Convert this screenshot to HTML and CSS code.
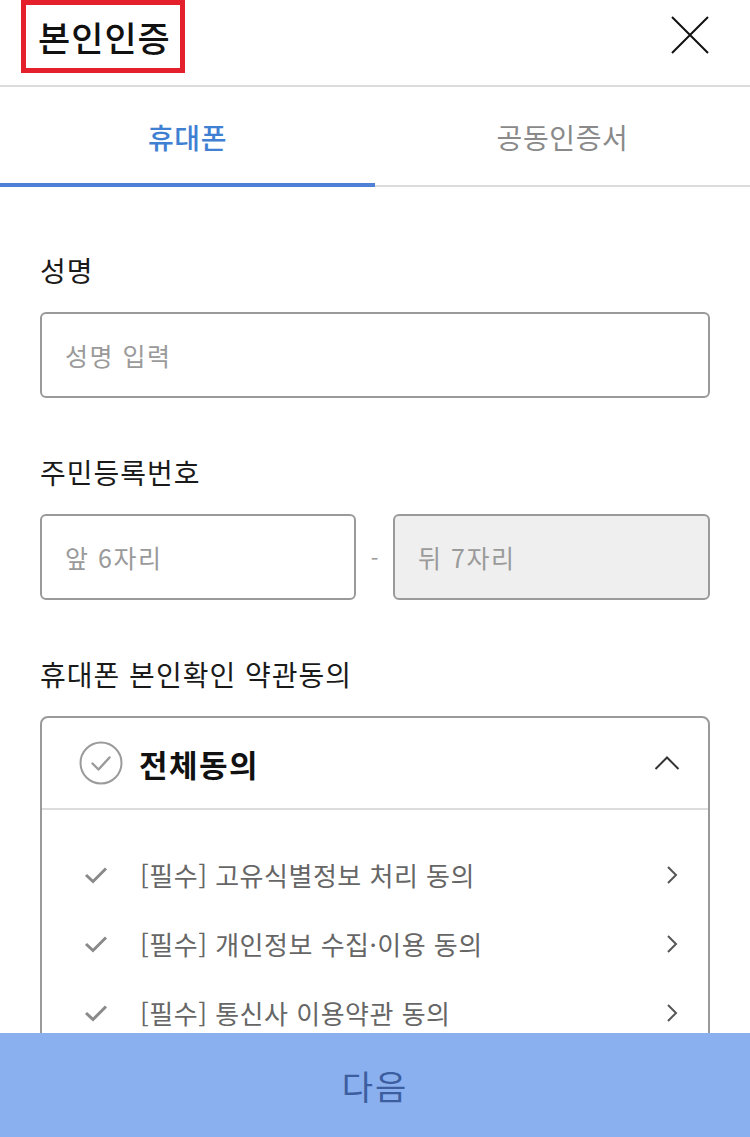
FILE: index.html
```html
<!DOCTYPE html>
<html lang="ko">
<head>
<meta charset="utf-8">
<title>본인인증</title>
<link rel="stylesheet" href="styles.css">
</head>
<body>
<div class="page">
  <header class="header">
    <h1 class="title">본인인증</h1>
    <button class="close" aria-label="닫기">
      <svg width="40" height="40" viewBox="0 0 40 40"><path d="M2 2 L38 38 M38 2 L2 38" stroke="#111" stroke-width="2" fill="none"/></svg>
    </button>
  </header>

  <nav class="tabs">
    <div class="tab active">휴대폰</div>
    <div class="tab">공동인증서</div>
  </nav>

  <main class="content">
    <div class="label">성명</div>
    <div class="input"><span class="ph">성명 입력</span></div>

    <div class="label">주민등록번호</div>
    <div class="rrn">
      <div class="input"><span class="ph">앞 6자리</span></div>
      <div class="dash">-</div>
      <div class="input disabled"><span class="ph">뒤 7자리</span></div>
    </div>

    <div class="label">휴대폰 본인확인 약관동의</div>
    <div class="agree">
      <div class="agree-head">
        <svg class="circle" width="44" height="44" viewBox="0 0 44 44"><circle cx="22" cy="22" r="20.5" fill="none" stroke="#9a9a9a" stroke-width="2"/><path d="M13.5 22.5 L19.5 28.5 L30.5 16.5" fill="none" stroke="#9a9a9a" stroke-width="2.4" stroke-linecap="round" stroke-linejoin="round"/></svg>
        <span class="all">전체동의</span>
        <svg class="up" width="26" height="16" viewBox="0 0 26 16"><path d="M1.5 14 L13 2.5 L24.5 14" fill="none" stroke="#333" stroke-width="2"/></svg>
      </div>
      <ul class="items">
        <li class="item">
          <svg class="chk" width="24" height="18" viewBox="0 0 24 18"><path d="M2 9 L9 15.5 L22 2.5" fill="none" stroke="#8a8a8a" stroke-width="3"/></svg>
          <span class="txt">[필수] 고유식별정보 처리 동의</span>
          <svg class="arr" width="12" height="20" viewBox="0 0 12 20"><path d="M2 2 L10 10 L2 18" fill="none" stroke="#555" stroke-width="2"/></svg>
        </li>
        <li class="item">
          <svg class="chk" width="24" height="18" viewBox="0 0 24 18"><path d="M2 9 L9 15.5 L22 2.5" fill="none" stroke="#8a8a8a" stroke-width="3"/></svg>
          <span class="txt">[필수] 개인정보 수집·이용 동의</span>
          <svg class="arr" width="12" height="20" viewBox="0 0 12 20"><path d="M2 2 L10 10 L2 18" fill="none" stroke="#555" stroke-width="2"/></svg>
        </li>
        <li class="item">
          <svg class="chk" width="24" height="18" viewBox="0 0 24 18"><path d="M2 9 L9 15.5 L22 2.5" fill="none" stroke="#8a8a8a" stroke-width="3"/></svg>
          <span class="txt">[필수] 통신사 이용약관 동의</span>
          <svg class="arr" width="12" height="20" viewBox="0 0 12 20"><path d="M2 2 L10 10 L2 18" fill="none" stroke="#555" stroke-width="2"/></svg>
        </li>
      </ul>
    </div>
  </main>

  <button class="next">다음</button>
</div>
</body>
</html>
```

FILE: styles.css
```css
* { box-sizing: border-box; }
html, body {
  margin: 0;
  padding: 0;
  height: 1137px;
  overflow: hidden;
  background: #fff;
}
body {
  font-family: "Noto Sans CJK KR", "Noto Sans", sans-serif;
  color: #111;
}
.page { width: 750px; }

.header {
  height: 87px;
  border-bottom: 2px solid #dcdcdc;
  display: flex;
  justify-content: space-between;
  align-items: flex-start;
  padding: 0 40px 0 21px;
}
.title {
  margin: 0;
  height: 73px;
  padding: 0 9px 0 12px;
  border: 5px solid #e3202b;
  font-size: 35px;
  font-weight: 500;
  letter-spacing: 1px;
  display: flex;
  align-items: center;
}
.close {
  margin-top: 15px;
  padding: 0;
  border: 0;
  background: none;
  width: 40px;
  height: 40px;
}
.close svg { display: block; }

.tabs {
  display: flex;
  height: 100px;
  align-items: flex-end;
}
.tab {
  flex: 1;
  height: 100px;
  display: flex;
  align-items: center;
  justify-content: center;
  font-size: 28px;
  color: #8a8a8a;
  border-bottom: 2px solid #dcdcdc;
  padding-top: 2px;
  letter-spacing: 0.6px;
}
.tab.active {
  color: #3f80d2;
  font-weight: 500;
  border-bottom: 4px solid #4f82d6;
  padding-top: 4px;
}

.content { padding: 0 40px; }
.label {
  font-size: 28px;
  line-height: 40px;
  color: #1a1a1a;
  margin: 54px 0 22px;
  letter-spacing: 1px;
}
.label:first-child { margin-top: 63px; }

.input {
  height: 86px;
  border: 2px solid #9a9a9a;
  border-radius: 6px;
  display: flex;
  align-items: center;
  padding-left: 23px;
  background: #fff;
}
.input.disabled { background: #efefef; }
.ph {
  font-size: 25px;
  color: #9a9a9a;
  letter-spacing: 1.5px;
}
.rrn {
  display: grid;
  grid-template-columns: 316px 1fr 317px;
}
.dash {
  display: flex;
  align-items: center;
  justify-content: center;
  color: #9a9a9a;
  font-size: 22px;
}

.agree {
  border: 2px solid #9a9a9a;
  border-radius: 8px;
  height: 420px;
  overflow: hidden;
}
.agree-head {
  height: 92px;
  border-bottom: 2px solid #dcdcdc;
  display: flex;
  align-items: center;
  padding: 0 28px 0 37px;
}
.circle { display: block; flex: none; }
.all {
  margin-left: 16px;
  font-size: 31px;
  font-weight: 700;
  color: #111;
  flex: 1;
  letter-spacing: 1.5px;
}
.up { display: block; }

.items {
  list-style: none;
  margin: 0;
  padding: 30px 0 0;
}
.item {
  height: 69px;
  display: flex;
  align-items: center;
  padding: 0 30px 0 42px;
}
.chk { display: block; flex: none; }
.txt {
  margin-left: 32px;
  flex: 1;
  font-size: 26px;
  color: #666;
  letter-spacing: 0.5px;
}
.arr { display: block; }

.next {
  position: fixed;
  left: 0;
  bottom: 0;
  width: 750px;
  height: 104px;
  border: 0;
  background: #8ab0f0;
  color: #3d5e9e;
  font-family: "Noto Sans CJK KR", sans-serif;
  font-size: 34px;
  letter-spacing: 2px;
  padding: 0;
}
```
